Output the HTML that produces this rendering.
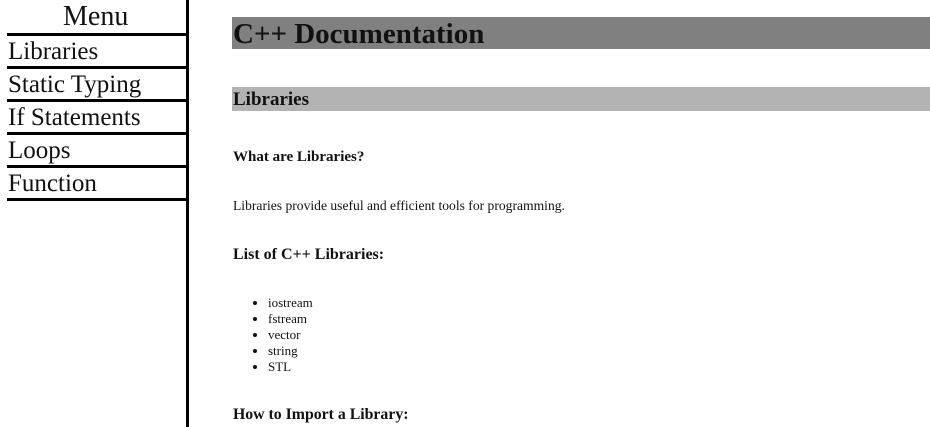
<!DOCTYPE html>
<html><head><style>
body{margin:0;width:930px;height:427px;overflow:hidden;background:#fff;font-family:"Liberation Serif",serif;color:#111;position:relative}
.a{position:absolute;white-space:nowrap}
.line{position:absolute;left:7px;width:180px;height:3px;background:#000}
.mi{position:absolute;left:8px;font-size:25px;line-height:30px}
</style></head><body>
<div class="a" style="left:186px;top:0;width:3px;height:427px;background:#000"></div>
<div class="a" style="left:63px;top:2px;font-size:28px;line-height:30px">Menu</div>
<div class="line" style="top:33px"></div>
<div class="mi" style="top:37px">Libraries</div>
<div class="line" style="top:66px"></div>
<div class="mi" style="top:70px">Static Typing</div>
<div class="line" style="top:99px"></div>
<div class="mi" style="top:103px">If Statements</div>
<div class="line" style="top:132px"></div>
<div class="mi" style="top:136px">Loops</div>
<div class="line" style="top:165px"></div>
<div class="mi" style="top:169px">Function</div>
<div class="line" style="top:198px"></div>

<div class="a" style="left:232px;top:17px;width:698px;height:32px;background:#808080"></div>
<div class="a" style="left:233px;top:18px;font-size:29px;line-height:32px;font-weight:bold">C++ Documentation</div>
<div class="a" style="left:232px;top:87px;width:698px;height:24px;background:#b3b3b3"></div>
<div class="a" style="left:233px;top:88px;font-size:19px;line-height:24px;font-weight:bold">Libraries</div>
<div class="a" style="left:233px;top:148px;font-size:15px;line-height:18px;font-weight:bold">What are Libraries?</div>
<div class="a" style="left:233px;top:198px;font-size:13.6px;line-height:16px">Libraries provide useful and efficient tools for programming.</div>
<div class="a" style="left:233px;top:246px;font-size:16px;line-height:18px;font-weight:bold">List of C++ Libraries:</div>
<ul class="a" style="left:228px;top:295px;margin:0;padding-left:40px;font-size:13px;line-height:16px">
<li>iostream</li><li>fstream</li><li>vector</li><li>string</li><li>STL</li></ul>
<div class="a" style="left:233px;top:406px;font-size:15.8px;line-height:18px;font-weight:bold">How to Import a Library:</div>
</body></html>
